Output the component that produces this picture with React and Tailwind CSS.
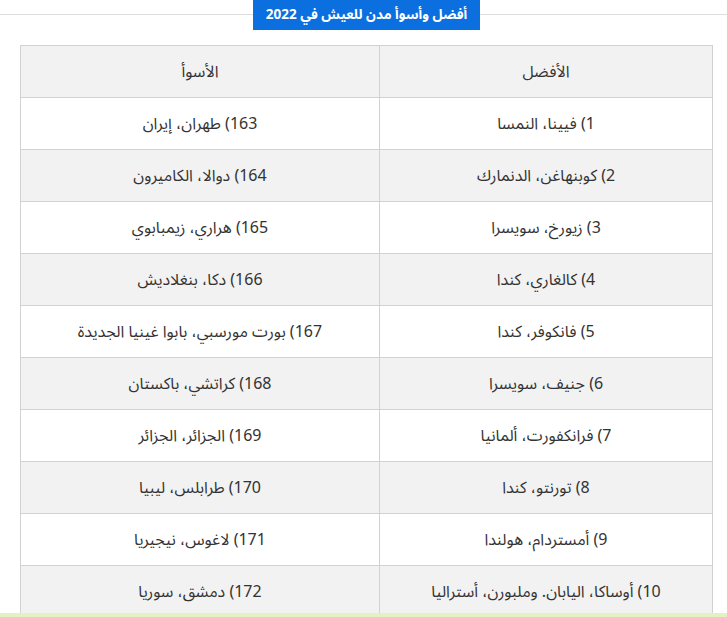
const rows = [
  ["1) فيينا، النمسا", "163) طهران، إيران"],
  ["2) كوبنهاغن، الدنمارك", "164) دوالا، الكاميرون"],
  ["3) زيورخ، سويسرا", "165) هراري، زيمبابوي"],
  ["4) كالغاري، كندا", "166) دكا، بنغلاديش"],
  ["5) فانكوفر، كندا", "167) بورت مورسبي، بابوا غينيا الجديدة"],
  ["6) جنيف، سويسرا", "168) كراتشي، باكستان"],
  ["7) فرانكفورت، ألمانيا", "169) الجزائر، الجزائر"],
  ["8) تورنتو، كندا", "170) طرابلس، ليبيا"],
  ["9) أمستردام، هولندا", "171) لاغوس، نيجيريا"],
  ["10) أوساكا، اليابان. وملبورن، أستراليا", "172) دمشق، سوريا"],
];

export default function App() {
  const font = { fontFamily: '"Noto Sans Arabic", "DejaVu Sans", sans-serif' };

  return (
    <div className="w-[727px] h-[617px] bg-white overflow-hidden relative" style={font}>
      {/* title with rule behind it */}
      <div className="relative h-[30px] flex justify-center">
        <div className="absolute left-0 right-0 top-[14px] h-px bg-[#dedede]" />
        <div dir="rtl" className="relative ml-[6px] w-[227px] h-[30px] bg-[#0b6fe0] text-white text-[13.5px] font-bold flex items-center justify-center">
          أفضل وأسوأ مدن للعيش في 2022
        </div>
      </div>

      <div className="pt-[15px] pl-[20px]">
        <table dir="rtl" className="w-[693px] border-collapse text-[16px] text-[#333]">
          <thead>
            <tr className="bg-[#f2f2f2] h-[52px]">
              <th className="w-[333px] font-normal border border-[#d2d2d2]">الأفضل</th>
              <th className="font-normal border border-[#d2d2d2]">الأسوأ</th>
            </tr>
          </thead>
          <tbody>
            {rows.map(([best, worst], i) => (
              <tr key={i} className={"h-[52px] " + (i % 2 === 1 ? "bg-[#f2f2f2]" : "bg-white")}>
                <td className="text-center border border-[#d2d2d2]">{best}</td>
                <td className="text-center border border-[#d2d2d2]">{worst}</td>
              </tr>
            ))}
          </tbody>
        </table>
      </div>

      <div className="absolute left-0 right-0 bottom-0 h-[4px] bg-[#e4f2c2]" />
    </div>
  );
}
